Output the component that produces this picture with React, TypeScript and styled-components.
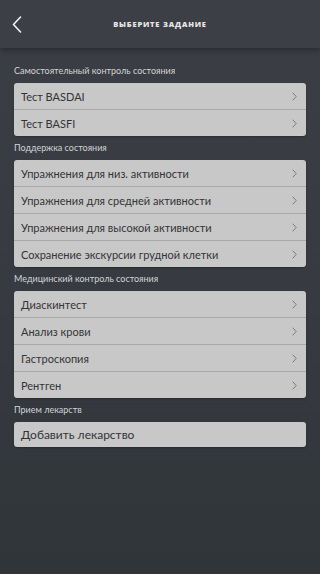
import React from 'react'
import styled, { createGlobalStyle } from 'styled-components'

const GlobalStyle = createGlobalStyle`
    html, body {
        margin: 0;
        padding: 0;
        height: 100%;
    }
    body {
        font-family: Lato, "Open Sans", sans-serif;
        background: #34383e;
    }
    #root {
        min-height: 100%;
    }
`;

const Screen = styled.div`
    width: 100%;
    min-height: 100vh;
    display: flex;
    flex-direction: column;
    background: linear-gradient(180deg, #3b3e44 0%, #373b41 50%, #30353a 100%);
    overflow: hidden;
`;

const Header = styled.header`
    height: 48px;
    flex-shrink: 0;
    display: grid;
    grid-template-columns: 40px 1fr 40px;
    align-items: center;
    background: #3c3f45;
    box-shadow: 0 2px 6px rgba(0, 0, 0, 0.35);
    position: relative;
    z-index: 1;
`;

const BackButton = styled.button`
    border: none;
    background: none;
    padding: 0 0 0 12px;
    height: 100%;
    display: flex;
    align-items: center;
    cursor: pointer;
`;

const Title = styled.h1`
    margin: 0;
    text-align: center;
    color: #e6e6e6;
    font-family: "Open Sans", sans-serif;
    font-weight: 800;
    font-size: 7.5px;
    letter-spacing: 0.8px;
    text-transform: uppercase;
`;

const Content = styled.main`
    padding: 17px 14px 0;
    display: flex;
    flex-direction: column;
    gap: 6px;
`;

const Section = styled.section`
    display: flex;
    flex-direction: column;
    gap: 6px;
`;

const SectionLabel = styled.div`
    height: 12px;
    line-height: 12px;
    font-size: 9px;
    color: #d2d3d5;
    white-space: nowrap;
`;

const Card = styled.div`
    background: #c8c8c8;
    border-radius: 3px;
    overflow: hidden;
    box-shadow: 0 1px 2px rgba(0, 0, 0, 0.25);
`;

const Row = styled.div<{ $large?: boolean }>`
    height: ${(p) => (p.$large ? 25 : 26)}px;
    display: flex;
    align-items: center;
    justify-content: space-between;
    padding: 0 9px 0 7px;
    color: #333436;
    font-size: ${(p) => (p.$large ? 12 : 11)}px;
    white-space: nowrap;
    & + & {
        border-top: 1px solid #a9a9a9;
    }
`;

const Chevron = () => (
    <svg width="5" height="9" viewBox="0 0 5 9">
        <path d="M0.7 0.7 L4.2 4.5 L0.7 8.3" fill="none" stroke="#7c7c7c" strokeWidth="1" />
    </svg>
);

const sections = [
    {
        title: 'Самостоятельный контроль состояния',
        items: ['Тест BASDAI', 'Тест BASFI'],
    },
    {
        title: 'Поддержка состояния',
        items: [
            'Упражнения для низ. активности',
            'Упражнения для средней активности',
            'Упражнения для высокой активности',
            'Сохранение экскурсии грудной клетки',
        ],
    },
    {
        title: 'Медицинский контроль состояния',
        items: ['Диаскинтест', 'Анализ крови', 'Гастроскопия', 'Рентген'],
    },
];

const App: React.FC = () => {
    return (
        <>
            <GlobalStyle />
            <Screen>
                <Header>
                    <BackButton aria-label="Назад">
                        <svg width="10" height="17" viewBox="0 0 10 17">
                            <path d="M8.5 1 L1.5 8.5 L8.5 16" fill="none" stroke="#f2f2f2" strokeWidth="1.6" strokeLinecap="round" strokeLinejoin="round" />
                        </svg>
                    </BackButton>
                    <Title>Выберите задание</Title>
                    <div />
                </Header>
                <Content>
                    {sections.map((s) => (
                        <Section key={s.title}>
                            <SectionLabel>{s.title}</SectionLabel>
                            <Card>
                                {s.items.map((item) => (
                                    <Row key={item}>
                                        <span>{item}</span>
                                        <Chevron />
                                    </Row>
                                ))}
                            </Card>
                        </Section>
                    ))}
                    <Section>
                        <SectionLabel>Прием лекарств</SectionLabel>
                        <Card>
                            <Row $large>
                                <span>Добавить лекарство</span>
                            </Row>
                        </Card>
                    </Section>
                </Content>
            </Screen>
        </>
    )
}

export default App
